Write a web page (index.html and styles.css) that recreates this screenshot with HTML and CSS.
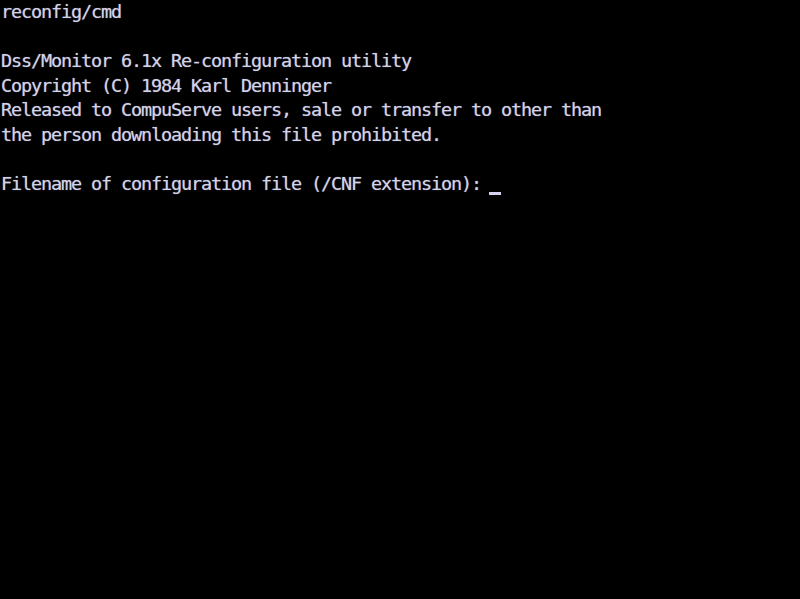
FILE: index.html
```html
<!DOCTYPE html>
<html>
<head>
<meta charset="utf-8">
<link rel="stylesheet" href="styles.css">
</head>
<body class="screen">
<pre class="term">reconfig/cmd

Dss/Monitor 6.1x Re-configuration utility
Copyright (C) 1984 Karl Denninger
Released to CompuServe users, sale or transfer to other than
the person downloading this file prohibited.

Filename of configuration file (/CNF extension): <span class="cursor"></span></pre>
</body>
</html>
```
FILE: styles.css
```css
html, body {
  margin: 0;
  padding: 0;
  background: #000;
  width: 800px;
  height: 599px;
  overflow: hidden;
}
.term {
  margin: 0;
  padding: 0 0 0 1px;
  font-family: "DejaVu Sans Mono", monospace;
  font-size: 18.5px;
  letter-spacing: -1.14px;
  line-height: 24.5px;
  color: #d2d2e8;
  text-shadow: 0 0 1px rgba(210, 210, 232, 0.6);
  white-space: pre;
}
.cursor {
  display: inline-block;
  width: 12px;
  height: 3px;
  margin-left: -2px;
  background: #d2d2e8;
  vertical-align: -5px;
}
```
